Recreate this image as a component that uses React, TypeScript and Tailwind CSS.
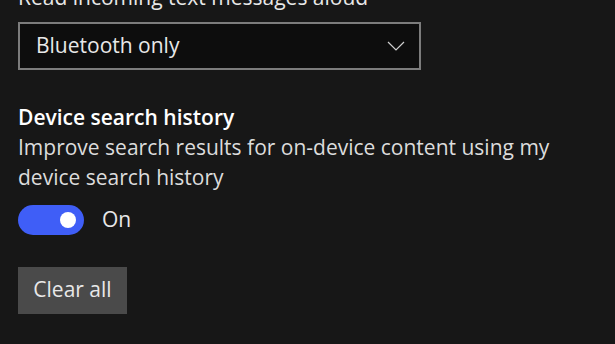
function App() {
  return (
    <div className="w-[615px] h-[344px] overflow-hidden bg-[#171717] pl-[18px] text-[#e8e8e8] font-['Open_Sans',sans-serif]">
      <p className="-mt-[18px] text-[21px] leading-[30px]">Read incoming text messages aloud</p>

      {/* dropdown */}
      <div className="mt-[10px] w-[403px] h-[48px] border-2 border-[#7c7c7c] bg-[#0d0d0d] flex items-center justify-between pl-[16px] pr-[14px]">
        <span className="text-[21px]">Bluetooth only</span>
        <svg width="18" height="10" viewBox="0 0 18 10" fill="none" stroke="#cfcfcf" strokeWidth="1.2">
          <polyline points="1,1 9,9 17,1" />
        </svg>
      </div>

      <h2 className="mt-[32px] text-[21px] leading-[30px] font-semibold text-white">Device search history</h2>
      <p className="text-[21px] leading-[30px] text-[#dcdcdc] w-[560px]">
        Improve search results for on-device content using my device search history
      </p>

      {/* toggle */}
      <div className="mt-[12px] flex items-center gap-[18px]">
        <div className="w-[66px] h-[30px] rounded-full bg-[#3f5ef7] flex items-center justify-end pr-[8px]">
          <div className="w-[16px] h-[16px] rounded-full bg-white" />
        </div>
        <span className="text-[21px]">On</span>
      </div>

      <button className="mt-[31px] w-[109px] h-[47px] bg-[#4a4a4a] text-[21px] text-[#e8e8e8] flex items-center justify-center">
        Clear all
      </button>
    </div>
  );
}

export default App;
